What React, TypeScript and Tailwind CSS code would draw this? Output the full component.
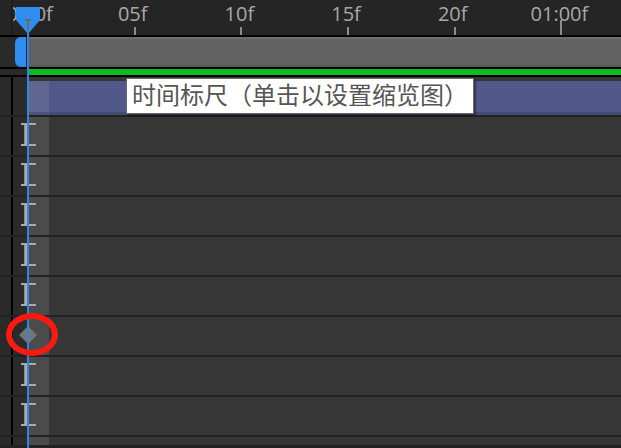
const ticks = ["00:00f", "05f", "10f", "15f", "20f", "01:00f"];
const rowKinds = ["beam", "beam", "beam", "beam", "beam", "diamond", "beam", "beam"];

function Beam() {
  return (
    <svg width="15" height="23" viewBox="0 0 15 23" fill="none" stroke="#ababab">
      <path d="M0 1H15M0 22H15" strokeWidth="2" />
      <path d="M5 1V22" strokeWidth="3.5" />
    </svg>
  );
}

function Diamond() {
  return (
    <svg width="18" height="18" viewBox="0 0 18 18">
      <path d="M9 0L18 9L9 18L0 9Z" fill="#757575" />
    </svg>
  );
}

function LeftCols({ children }: { children?: React.ReactNode }) {
  return (
    <>
      <div className="w-[11px] shrink-0 bg-[#2a2a2a]" />
      <div className="w-[2px] shrink-0 bg-black" />
      {children}
    </>
  );
}

function Row({ kind }: { kind: string }) {
  return (
    <div className="flex h-10 shrink-0 border-b-2 border-[#222222] bg-[#363636]">
      <LeftCols />
      <div className="relative flex w-9 shrink-0 justify-end bg-[#2b2b2b]">
        <div className="w-5 bg-[#4b4b4b]" />
        {kind === "beam" ? (
          <div className="absolute left-[8px] top-[6px] flex">
            <Beam />
          </div>
        ) : (
          <div className="absolute left-[6px] top-[9px] flex">
            <Diamond />
          </div>
        )}
      </div>
      <div className="flex-1" />
    </div>
  );
}

export default function App() {
  return (
    <div className="relative h-[448px] w-[621px] overflow-hidden bg-[#222222] font-['Liberation_Sans','Noto_Sans_CJK_SC',sans-serif]">
      {/* ruler */}
      <div className="flex h-[35px] bg-[#252525]">
        <div className="w-[11px] shrink-0" />
        <div className="w-[2px] shrink-0 bg-[#1e1e1e]" />
        <div className="flex flex-1 overflow-hidden">
          <div className="-ml-[38.35px] flex">
            {ticks.map((t, i) => (
              <div key={t} className="flex w-[106.7px] shrink-0 flex-col items-center">
                <span className={i === 0
                  ? "h-[27px] whitespace-nowrap pr-[8px] font-['Open_Sans','Liberation_Sans',sans-serif] text-[20px] leading-[27px] text-[#a8a8a8]"
                  : "h-[27px] whitespace-nowrap pr-[4px] font-['Open_Sans','Liberation_Sans',sans-serif] text-[20px] leading-[27px] text-[#a8a8a8]"}>{t}</span>
                {t === "01:00f" ? (
                  <span className="-mt-[7px] h-[15px] w-[2px] bg-[#8c8c8c]" />
                ) : (
                  <span className="h-[8px] w-[2px] bg-[#8c8c8c]" />
                )}
              </div>
            ))}
          </div>
        </div>
      </div>

      {/* work area bar */}
      <div className="flex h-[34px] border-y-2 border-black bg-[#2a2a2a]">
        <div className="w-[15px] shrink-0" />
        <div className="h-[30px] w-[11px] shrink-0 rounded-l-[6px] bg-[#2f8df0]" />
        <div className="w-[3px] shrink-0" />
        <div className="flex-1 border-y-2 border-t-[#6e6e6e] border-b-[#585858] bg-[#626262]" />
      </div>

      {/* green bar */}
      <div className="flex h-[8px] border-b-2 border-black bg-[#2a2a2a]">
        <div className="w-[29px] shrink-0" />
        <div className="flex-1 bg-[#10ba25]" />
      </div>

      {/* comp marker row */}
      <div className="flex h-10 border-b-2 border-[#222222] bg-[#363636]">
        <LeftCols>
          <div className="w-4 shrink-0 bg-[#2b2b2b]" />
        </LeftCols>
        <div className="flex flex-1 flex-col pt-[4px]">
          <div className="flex h-[34px]">
            <div className="flex w-5 flex-col">
              <div className="flex-1 bg-[#5f668f]" />
              <div className="h-[3px] bg-[#4d5478]" />
            </div>
            <div className="flex-1 border-b-[3px] border-[#454c72] bg-[#51598a]" />
          </div>
        </div>
      </div>

      {rowKinds.map((kind, i) => (
        <Row key={i} kind={kind} />
      ))}
      <div className="flex h-2">
        <LeftCols>
          <div className="flex w-9 shrink-0 justify-end bg-[#2b2b2b]">
            <div className="w-5 bg-[#4b4b4b]" />
          </div>
        </LeftCols>
        <div className="flex-1 bg-[#363636]" />
      </div>

      {/* playhead */}
      <div className="absolute left-[27px] top-[20px] h-[428px] w-[2px] bg-[#2e86e0]" />
      <svg className="absolute left-[16px] top-[7px]" width="24" height="27" viewBox="0 0 24 27">
        <path d="M0 0H24V13L12 27L0 13Z" fill="#2f8df0" />
        <path d="M9 13H15M12 13V24" stroke="#6a6a6a" strokeWidth="2" fill="none" />
      </svg>

      {/* tooltip */}
      <div className="absolute left-[126px] top-[78px] flex h-[36px] w-[348px] items-center border border-[#6a6a6a] bg-white pl-[5px] text-[24px] leading-none whitespace-nowrap text-[#555] shadow-[2px_2px_2px_rgba(0,0,0,0.4)]">
        时间标尺（单击以设置缩览图）
      </div>

      {/* red annotation */}
      <div className="absolute left-[6px] top-[313px] h-[43px] w-[52px] rounded-[50%] border-[6px] border-[#fb1a10]" />
    </div>
  );
}
